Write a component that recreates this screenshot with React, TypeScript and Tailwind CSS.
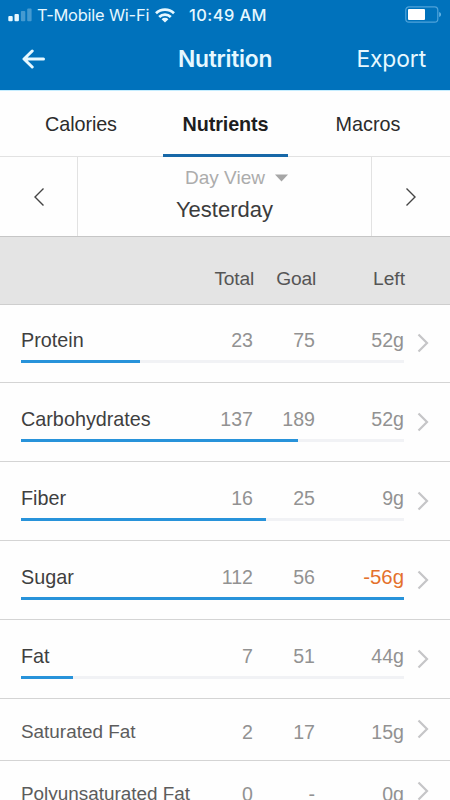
import React from "react";

type Nutrient = {
  name: string;
  total: string;
  goal: string;
  left: string;
  bar?: number;
  over?: boolean;
};

const nutrients: Nutrient[] = [
  { name: "Protein", total: "23", goal: "75", left: "52g", bar: 31.2 },
  { name: "Carbohydrates", total: "137", goal: "189", left: "52g", bar: 72.3 },
  { name: "Fiber", total: "16", goal: "25", left: "9g", bar: 64 },
  { name: "Sugar", total: "112", goal: "56", left: "-56g", bar: 100, over: true },
  { name: "Fat", total: "7", goal: "51", left: "44g", bar: 13.6 },
  { name: "Saturated Fat", total: "2", goal: "17", left: "15g" },
  { name: "Polyunsaturated Fat", total: "0", goal: "-", left: "0g" },
];

function StatusBar() {
  return (
    <div className="flex h-[30px] items-center pl-2 pr-2 text-[#e6f8ff]">
      <svg width="24" height="14" viewBox="0 0 24 14" fill="currentColor">
        <rect x="0.3" y="8.1" width="4.4" height="5.2" rx="1" />
        <rect x="6.5" y="6" width="4.4" height="7.3" rx="1" />
        <rect x="12.9" y="3" width="4.4" height="10.3" rx="1" opacity="0.3" />
        <rect x="19.2" y="0.4" width="4.4" height="12.9" rx="1" opacity="0.3" />
      </svg>
      <span className="ml-[5px] w-[113px] whitespace-nowrap text-[16.4px] tracking-[-0.2px]">T-Mobile Wi-Fi</span>
      <svg className="ml-[5px]" width="20" height="15" viewBox="0 0 20 15" fill="none" stroke="currentColor" strokeWidth="2.7">
        <path d="M1 5.3a13 13 0 0 1 18 0" />
        <path d="M4.2 9a8.3 8.3 0 0 1 11.6 0" />
        <path d="M10 14.4 6.6 11.2a4.8 4.8 0 0 1 6.8 0Z" fill="currentColor" stroke="none" />
      </svg>
      <span className="ml-[14px] whitespace-nowrap text-[16.4px] font-medium tracking-[0.45px]">10:49 AM</span>
      <svg className="ml-auto" width="38" height="18" viewBox="0 0 38 18">
        <rect x="1.8" y="0.8" width="32" height="15.4" rx="3.2" fill="none" stroke="#4fa3da" strokeWidth="1.2" />
        <rect x="4" y="3" width="17" height="11" rx="1" fill="#fff" />
        <path d="M35.2 6v5c2.4-1 2.4-4 0-5Z" fill="#65b5e7" />
      </svg>
    </div>
  );
}

function Header() {
  return (
    <header className="h-[90px] shrink-0 bg-[#0072bc] font-['Inter',sans-serif]">
      <StatusBar />
      <div className="flex h-[58px] items-center pl-[22px] pr-[24px] text-[#e6f8ff]">
        <svg width="24" height="20" viewBox="0 0 24 20" fill="none" stroke="currentColor" strokeWidth="3" strokeLinecap="round" strokeLinejoin="round">
          <path d="M21.5 10H2.5M10.2 2 2 10l8.2 8" />
        </svg>
        <h1 className="ml-[132px] whitespace-nowrap text-[22.8px] font-semibold leading-7 tracking-[-0.25px]">Nutrition</h1>
        <button className="ml-auto whitespace-nowrap text-[22.8px] leading-7 tracking-[-0.1px]">Export</button>
      </div>
    </header>
  );
}

function Tabs() {
  return (
    <nav className="flex h-[67px] shrink-0 border-b-[1.5px] border-t border-[#e2e2e2] border-t-[#c5edff] text-[19.8px] leading-6 text-[#2b2b2b]">
      <button className="w-[162px] tracking-[-0.1px]">Calories</button>
      <button className="-mb-px ml-px w-[125px] border-b-[3px] border-[#1768a8] pt-[2px] font-bold tracking-[-0.1px] text-[#1e1e1e]">Nutrients</button>
      <button className="w-[160px]">Macros</button>
    </nav>
  );
}

function DayPicker() {
  return (
    <div className="flex h-[80px] shrink-0 border-b border-[#c6c6c6]">
      <button className="flex w-[78px] items-center justify-center border-r-[1.5px] border-[#e2e2e2]">
        <svg width="12" height="20" viewBox="0 0 12 20" fill="none" stroke="#444" strokeWidth="1.4">
          <path d="m10.5 1.5-8.5 8.5 8.5 8.5" />
        </svg>
      </button>
      <div className="flex flex-1 flex-col items-center">
        <div className="mt-[9px] flex items-center whitespace-nowrap pl-6 text-[19px] leading-6 text-[#acacac]">
          Day View
          <svg className="ml-[10px]" width="13" height="8" viewBox="0 0 13 8" fill="#a6a6a6">
            <path d="M0 .5h13L6.5 7.5Z" />
          </svg>
        </div>
        <div className="mt-[6px] text-[22px] leading-7 text-[#3c3c3c]">Yesterday</div>
      </div>
      <button className="flex w-[79px] items-center justify-center border-l-[1.5px] border-[#e2e2e2]">
        <svg width="12" height="20" viewBox="0 0 12 20" fill="none" stroke="#444" strokeWidth="1.4">
          <path d="m1.5 1.5 8.5 8.5-8.5 8.5" />
        </svg>
      </button>
    </div>
  );
}

function ColumnHeads() {
  return (
    <div className="flex h-[68px] shrink-0 border-b border-[#cecece] bg-[#e4e4e4] pt-[30px] text-right text-[19.2px] leading-6 tracking-[-0.2px] text-[#555]">
      <span className="w-[254px]">Total</span>
      <span className="w-[62px]">Goal</span>
      <span className="w-[89px] tracking-normal">Left</span>
    </div>
  );
}

function NutrientRow({ item }: { item: Nutrient }) {
  const main = item.bar !== undefined;
  return (
    <div className={`flex shrink-0 border-b border-[#d4d4d4] ${main ? "h-[79px]" : "h-[62px]"}`}>
      <div className={`ml-[21px] w-[383px] ${main ? "pt-[24px]" : "pt-[21px]"}`}>
        <div className="flex text-right text-[19.6px] leading-6 text-[#929292]">
          <span className={`w-[172px] whitespace-nowrap text-left ${main ? "text-[19.8px] text-[#3f3f3f]" : "text-[18.9px] text-[#5c5c5c]"}`}>{item.name}</span>
          <span className="w-[60px]">{item.total}</span>
          <span className="w-[62px]">{item.goal}</span>
          <span className={`w-[89px] ${item.over ? "text-[20.4px] text-[#e4712c]" : ""}`}>{item.left}</span>
        </div>
        {main && (
          <div className="mt-[8px] h-[3px] bg-[#f1f2f5]">
            <div className="h-full bg-[#2893da]" style={{ width: `${item.bar}%` }} />
          </div>
        )}
      </div>
      <svg className={`ml-[13px] ${main ? "mt-[29px]" : "mt-[20px]"}`} width="12" height="20" viewBox="0 0 12 20" fill="none" stroke="#c5c5c7" strokeWidth="2.2">
        <path d="m1.5 1.5 8.5 8.5-8.5 8.5" />
      </svg>
    </div>
  );
}

export default function App() {
  return (
    <div className="flex h-[800px] w-[450px] flex-col overflow-hidden bg-[#fefefe] font-['Liberation_Sans',Arial,sans-serif]">
      <Header />
      <Tabs />
      <DayPicker />
      <ColumnHeads />
      <div className="-mt-px flex flex-col">
        {nutrients.map((item) => (
          <NutrientRow key={item.name} item={item} />
        ))}
      </div>
    </div>
  );
}
